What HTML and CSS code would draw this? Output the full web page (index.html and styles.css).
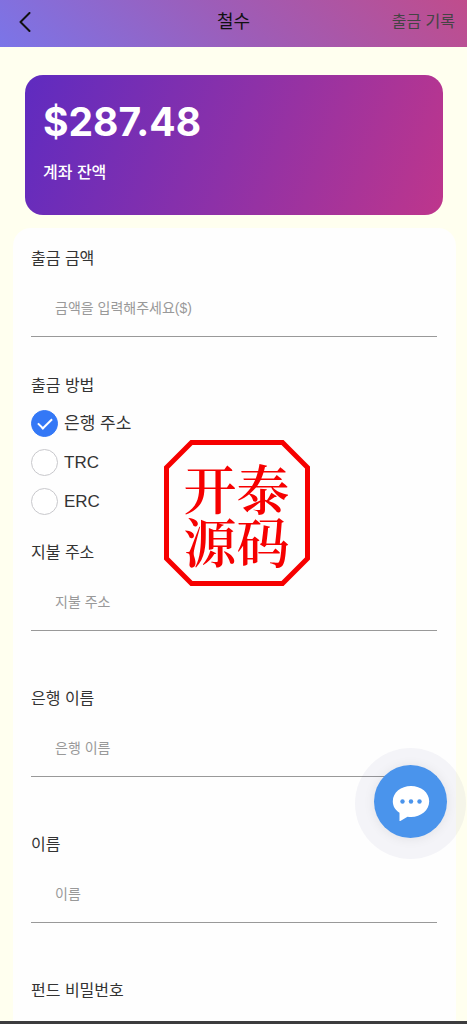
FILE: index.html
```html
<!DOCTYPE html>
<html lang="ko">
<head>
    <meta charset="utf-8">
    <meta name="viewport" content="width=device-width, initial-scale=1">
    <title>철수</title>
    <link rel="stylesheet" href="styles.css">
</head>
<body>
    <header class="nav-bar">
        <a class="nav-back" href="#" aria-label="뒤로">
            <svg width="12" height="20" viewBox="0 0 12 20"><path d="M10.500 1 1.500 10l9 9" fill="none" stroke="#111" stroke-width="2" stroke-linecap="round" stroke-linejoin="round"/></svg>
        </a>
        <h1 class="nav-title">철수</h1>
        <a class="nav-record" href="#">출금 기록</a>
    </header>

    <section class="balance">
        <div class="balance-amount">$287.48</div>
        <div class="balance-label">계좌 잔액</div>
    </section>

    <form class="panel">
        <div class="field">
            <label class="label" for="amount">출금 금액</label>
            <input class="input" id="amount" type="text" placeholder="금액을 입력해주세요($)">
        </div>

        <fieldset class="methods">
            <legend class="label">출금 방법</legend>
            <label class="method"><input class="radio" type="radio" name="method" checked>은행 주소</label>
            <label class="method"><input class="radio" type="radio" name="method">TRC</label>
            <label class="method"><input class="radio" type="radio" name="method">ERC</label>
        </fieldset>

        <div class="field">
            <label class="label" for="address">지불 주소</label>
            <input class="input" id="address" type="text" placeholder="지불 주소">
        </div>
        <div class="field">
            <label class="label" for="bank">은행 이름</label>
            <input class="input" id="bank" type="text" placeholder="은행 이름">
        </div>
        <div class="field">
            <label class="label" for="name">이름</label>
            <input class="input" id="name" type="text" placeholder="이름">
        </div>
        <div class="label">펀드 비밀번호</div>
    </form>
    <div class="bottom-bar"></div>

    <!-- Seal over the page -->
    <div class="seal">
        <svg class="seal-frame" viewBox="0 0 146 146">
            <path d="M27.500 2.500h91l25 25v91l-25 25h-91l-25-25v-91z" fill="none" stroke="#f60000" stroke-width="5"/>
        </svg>
        <div class="seal-text" lang="zh">开泰<br>源码</div>
    </div>

    <button class="chat" type="button" aria-label="채팅">
        <svg width="38" height="38" viewBox="0 0 38 38">
            <path d="M19 3C9 3 .800 9.500.800 18.300c0 5 2.600 9 6.700 11.500V38.500l8-4.800c1.200.2 2.300.3 3.500.3 10 0 18.200-6.800 18.200-15.700S29 3 19 3z" fill="#fff"/>
            <g fill="#4a94ec"><circle cx="10.500" cy="18.500" r="2.200"/><circle cx="19" cy="18.500" r="2.200"/><circle cx="27.500" cy="18.500" r="2.200"/></g>
        </svg>
    </button>
</body>
</html>
```
FILE: styles.css
```css
* {
    box-sizing: border-box;
}
body {
    margin: 0;
    min-height: 100vh;
    display: flex;
    flex-direction: column;
    background: #ffffef;
    color: #333;
    font-family: "Liberation Sans", "Noto Sans CJK KR", sans-serif;
    font-size: 16px;
    line-height: 24px;
}
.nav-bar {
    height: 47px;
    padding: 0 12px 4px;
    display: grid;
    grid-template-columns: 1fr auto 1fr;
    align-items: center;
    background: linear-gradient(45deg, #7b75e8, #9d5db8 50%, #c04c8c);
}
.nav-back {
    display: flex;
    padding-left: 7px;
}
.nav-title {
    margin: 0;
    color: #111;
    font-size: 18px;
    font-weight: 400;
}
.nav-record {
    justify-self: end;
    color: #444;
    text-decoration: none;
}
.balance {
    height: 140px;
    margin: 28px 24px 13px 25px;
    padding: 23px 18px;
    border-radius: 18px;
    background: linear-gradient(110deg, #5f2bc0, #8d31a8 50%, #be368c);
    color: #fff;
}
.balance-amount {
    font-family: Inter, sans-serif;
    font-size: 39px;
    font-weight: 700;
    line-height: 48px;
}
.balance-label {
    margin-top: 15px;
    font-weight: 500;
}
.panel {
    flex: 1;
    margin: 0 11px 0 13px;
    padding: 19px 19px 16px 18px;
    border-radius: 18px 18px 0 0;
    background: #fefefe;
}
.label {
    display: block;
    padding: 0;
}
.input {
    display: block;
    width: 100%;
    height: 57px;
    margin: 9px 0 56px;
    padding: 0 24px;
    border: 0;
    border-bottom: 1px solid #999;
    background: transparent;
    color: #333;
    font-family: inherit;
    font-size: 14px;
    outline: none;
}
.input::placeholder {
    color: #999;
    opacity: 1;
}
.field:first-child .input {
    margin-bottom: 37px;
}
.methods {
    margin: 0 0 26px;
    padding: 0;
    border: 0;
}
.method {
    display: flex;
    align-items: center;
    gap: 6px;
    height: 27px;
    margin-top: 12px;
    font-size: 17px;
}
.radio {
    appearance: none;
    width: 27px;
    height: 27px;
    margin: 0;
    display: grid;
    place-items: center;
    border: 1px solid #c8c8cc;
    border-radius: 50%;
    background: #fff;
}
.radio:checked {
    border-color: #3478f6;
    background: #3478f6;
}
/* Tick inside the selected radio */
.radio:checked::before {
    content: "";
    width: 12px;
    height: 6px;
    margin-bottom: 4px;
    border-left: 2px solid #fff;
    border-bottom: 2px solid #fff;
    transform: rotate(-45deg);
}
.bottom-bar {
    height: 3px;
    background: #3c3c3e;
}
.seal {
    position: fixed;
    top: 50%;
    left: 50%;
    width: 146px;
    height: 146px;
    margin: -72px 0 0 -70px;
    display: grid;
    place-items: center;
    pointer-events: none;
}
.seal-frame {
    grid-area: 1 / 1;
    width: 146px;
    height: 146px;
}
.seal-text {
    grid-area: 1 / 1;
    padding-top: 2px;
    color: #f60000;
    font-family: "Noto Serif CJK SC", "Noto Sans CJK SC", serif;
    font-size: 53px;
    font-weight: 600;
    line-height: 53px;
}
.chat {
    position: fixed;
    right: 20px;
    bottom: 186px;
    width: 73px;
    height: 73px;
    padding: 0;
    display: grid;
    place-items: center;
    border: 0;
    border-radius: 50%;
    background: #4a94ec;
    box-shadow: 0 1px 12px rgba(0, 0, 0, 0.08), 0 2px 0 19px rgba(60, 60, 140, 0.05);
}
```
